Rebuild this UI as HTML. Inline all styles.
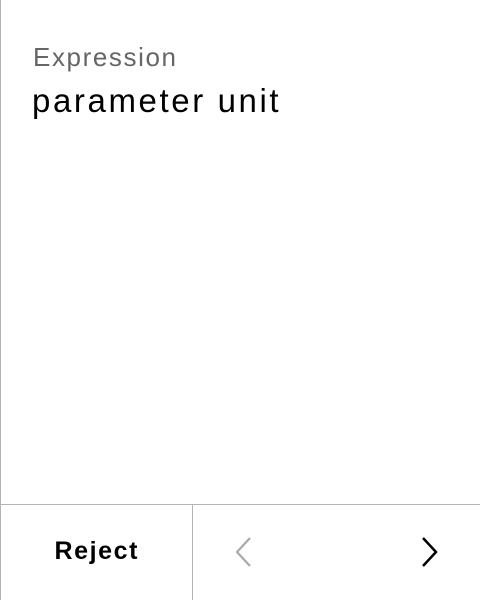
<!DOCTYPE html>
<html><head><style>
body{margin:0;width:480px;height:600px;background:#fff;position:relative;overflow:hidden;font-family:"Liberation Sans",sans-serif}
.l{position:absolute;left:0;top:0;width:1px;height:600px;background:#b4b4b4}
.h{position:absolute;left:0;top:504px;width:480px;height:1px;background:#b4b4b4}
.v{position:absolute;left:192px;top:504px;width:1px;height:96px;background:#b4b4b4}
.t1{position:absolute;left:33px;top:41px;font-size:26px;color:#666;line-height:32px;letter-spacing:1.6px}
.t2{position:absolute;left:32px;top:82px;font-size:33px;color:#000;line-height:38px;letter-spacing:2.6px}
.r{position:absolute;left:0;top:533px;width:192px;text-align:center;font-size:25px;font-weight:bold;line-height:36px;letter-spacing:1.6px;text-indent:1.6px}
svg{position:absolute}
</style></head><body>
<div class="l"></div><div class="h"></div><div class="v"></div>
<div class="t1">Expression</div>
<div class="t2">parameter unit</div>
<div class="r">Reject</div>
<svg style="left:228px;top:534px" width="30" height="36"><path d="M22 4 L9 18 L22 32" fill="none" stroke="#aaa" stroke-width="2.2"/></svg>
<svg style="left:414px;top:534px" width="30" height="36"><path d="M9 4 L22 18 L9 32" fill="none" stroke="#000" stroke-width="2.5"/></svg>
</body></html>
